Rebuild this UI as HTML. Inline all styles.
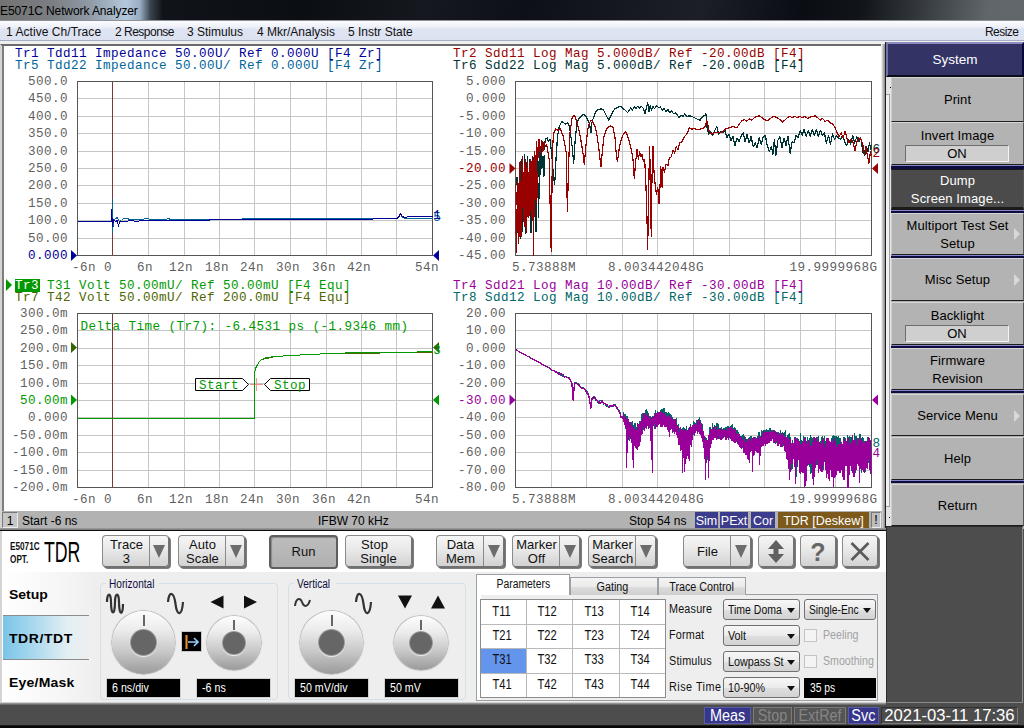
<!DOCTYPE html>
<html><head><meta charset="utf-8"><title>E5071C Network Analyzer</title>
<style>
*{box-sizing:border-box;margin:0;padding:0}
html,body{width:1024px;height:728px;overflow:hidden;background:#4d4d4d;font-family:"Liberation Sans",sans-serif;}
.abs{position:absolute}
#title{left:0;top:0;width:1024px;height:21px;background:
 linear-gradient(100deg,rgba(255,255,255,0) 0,rgba(255,255,255,0) 850px,rgba(70,75,80,.5) 900px,rgba(112,118,122,.8) 975px,rgba(108,113,116,.85) 1024px),
 linear-gradient(100deg,#23272c 0,#11151b 140px,#0b0e13 300px,#15191f 420px,#0d1016 520px,#1c2026 690px,#0a0d13 790px,#12161b 860px,#2a2e33 1024px);
 border-bottom:1px solid #8d9095}
#title .glow{left:0;top:0;width:175px;height:20px;background:linear-gradient(90deg,rgba(118,118,118,.95) 0,rgba(128,132,136,.95) 30%,rgba(150,162,175,.95) 52%,rgba(186,206,226,.97) 72%,rgba(168,190,212,.9) 80%,rgba(90,105,120,.55) 86%,rgba(20,25,30,0) 93%)}
#title .t{left:0px;top:4px;font-size:12px;color:#000;white-space:nowrap;letter-spacing:-0.1px}
#menu{left:0;top:21px;width:1024px;height:20px;background:linear-gradient(#fbfcfe 0,#eef1f9 30%,#dfe4f3 45%,#dde2f1 100%);border-bottom:1px solid #a9afc2;font-size:12px;color:#111}
#menu span{position:absolute;top:4px;white-space:nowrap}
#gap{left:0;top:41px;width:1024px;height:3px;background:#efefef}
/* chart window */
#cw{left:0;top:44px;width:885px;height:467px;background:#fff;border-left:2px solid #d4d4d4;border-top:2px solid #6b6b6b;box-shadow:inset 2px 0 0 #7d7d7d}
#cwr{left:881px;top:44px;width:5px;height:486px;background:linear-gradient(90deg,#fff 0,#d9d9d9 1px,#bdbdbd 2px,#8a8a8a 4px,#555 5px)}
#sb{left:0;top:511px;width:882px;height:18px;background:#b2b2b2;font-size:12px;color:#000;border-left:2px solid #d4d4d4}
#sb span{position:absolute;white-space:nowrap}
#sbline{left:0;top:528px;width:886px;height:3px;background:linear-gradient(#a2a2a2 0,#7a7a7a 60%,#0c0c0c 67%,#0c0c0c 100%);z-index:5}
.tag{position:absolute;top:1px;height:16px;color:#fff;font-size:12.5px;line-height:18px;text-align:center;white-space:nowrap}
</style></head><body>
<div id="title" class="abs"><div class="glow abs"></div><div class="t abs">E5071C Network Analyzer</div></div>
<div id="menu" class="abs"><span style="left:6px;letter-spacing:.05px">1 Active Ch/Trace</span><span style="left:115px;letter-spacing:-.5px">2 Response</span><span style="left:187px">3 Stimulus</span><span style="left:257px">4 Mkr/Analysis</span><span style="left:348px">5 Instr State</span><span style="left:985px;letter-spacing:-.55px">Resize</span></div>
<div id="gap" class="abs"></div>
<div id="cw" class="abs"></div>
<svg width="884" height="470" viewBox="0 43 884 470" style="position:absolute;left:0;top:43px" shape-rendering="auto">
<defs>
<clipPath id="ctl"><rect x="77" y="81" width="356" height="175"/></clipPath>
<clipPath id="ctr"><rect x="515.5" y="81" width="356" height="175"/></clipPath>
<clipPath id="cbl"><rect x="77" y="313" width="356" height="175"/></clipPath>
<clipPath id="cbr"><rect x="515.5" y="313" width="356" height="175"/></clipPath>
</defs>
<line x1="112.5" y1="82" x2="112.5" y2="255" stroke="#7a3a3a" stroke-width="1"/>
<line x1="148.5" y1="82" x2="148.5" y2="255" stroke="#c6c6c6" stroke-width="1"/>
<line x1="184.5" y1="82" x2="184.5" y2="255" stroke="#c6c6c6" stroke-width="1"/>
<line x1="219.5" y1="82" x2="219.5" y2="255" stroke="#c6c6c6" stroke-width="1"/>
<line x1="254.5" y1="82" x2="254.5" y2="255" stroke="#c6c6c6" stroke-width="1"/>
<line x1="290.5" y1="82" x2="290.5" y2="255" stroke="#c6c6c6" stroke-width="1"/>
<line x1="326.5" y1="82" x2="326.5" y2="255" stroke="#c6c6c6" stroke-width="1"/>
<line x1="361.5" y1="82" x2="361.5" y2="255" stroke="#c6c6c6" stroke-width="1"/>
<line x1="396.5" y1="82" x2="396.5" y2="255" stroke="#c6c6c6" stroke-width="1"/>
<line x1="78" y1="98.5" x2="432" y2="98.5" stroke="#c6c6c6" stroke-width="1"/>
<line x1="78" y1="116.5" x2="432" y2="116.5" stroke="#c6c6c6" stroke-width="1"/>
<line x1="78" y1="133.5" x2="432" y2="133.5" stroke="#c6c6c6" stroke-width="1"/>
<line x1="78" y1="151.5" x2="432" y2="151.5" stroke="#c6c6c6" stroke-width="1"/>
<line x1="78" y1="168.5" x2="432" y2="168.5" stroke="#c6c6c6" stroke-width="1"/>
<line x1="78" y1="185.5" x2="432" y2="185.5" stroke="#c6c6c6" stroke-width="1"/>
<line x1="78" y1="203.5" x2="432" y2="203.5" stroke="#c6c6c6" stroke-width="1"/>
<line x1="78" y1="220.5" x2="432" y2="220.5" stroke="#c6c6c6" stroke-width="1"/>
<line x1="78" y1="238.5" x2="432" y2="238.5" stroke="#c6c6c6" stroke-width="1"/>
<line x1="112.5" y1="82" x2="112.5" y2="255" stroke="#7a3a3a" stroke-width="1"/>
<rect x="77.5" y="81.5" width="355" height="174" fill="none" stroke="#555555" stroke-width="1"/>
<text x="15" y="57" fill="#000099" text-anchor="start" font-family="Liberation Mono, monospace" font-size="12.6" letter-spacing="0.44"  xml:space="preserve">Tr1 Tdd11 Impedance 50.00U/ Ref 0.000U [F4 Zr]</text>
<text x="15" y="69" fill="#006699" text-anchor="start" font-family="Liberation Mono, monospace" font-size="12.6" letter-spacing="0.44"  xml:space="preserve">Tr5 Tdd22 Impedance 50.00U/ Ref 0.000U [F4 Zr]</text>
<text x="68" y="84.9" fill="#5f5f5f" text-anchor="end" font-family="Liberation Mono, monospace" font-size="12.6" letter-spacing="0.44"  xml:space="preserve">500.0</text>
<text x="68" y="102.3" fill="#5f5f5f" text-anchor="end" font-family="Liberation Mono, monospace" font-size="12.6" letter-spacing="0.44"  xml:space="preserve">450.0</text>
<text x="68" y="119.7" fill="#5f5f5f" text-anchor="end" font-family="Liberation Mono, monospace" font-size="12.6" letter-spacing="0.44"  xml:space="preserve">400.0</text>
<text x="68" y="137.1" fill="#5f5f5f" text-anchor="end" font-family="Liberation Mono, monospace" font-size="12.6" letter-spacing="0.44"  xml:space="preserve">350.0</text>
<text x="68" y="154.5" fill="#5f5f5f" text-anchor="end" font-family="Liberation Mono, monospace" font-size="12.6" letter-spacing="0.44"  xml:space="preserve">300.0</text>
<text x="68" y="171.9" fill="#5f5f5f" text-anchor="end" font-family="Liberation Mono, monospace" font-size="12.6" letter-spacing="0.44"  xml:space="preserve">250.0</text>
<text x="68" y="189.3" fill="#5f5f5f" text-anchor="end" font-family="Liberation Mono, monospace" font-size="12.6" letter-spacing="0.44"  xml:space="preserve">200.0</text>
<text x="68" y="206.7" fill="#5f5f5f" text-anchor="end" font-family="Liberation Mono, monospace" font-size="12.6" letter-spacing="0.44"  xml:space="preserve">150.0</text>
<text x="68" y="224.1" fill="#5f5f5f" text-anchor="end" font-family="Liberation Mono, monospace" font-size="12.6" letter-spacing="0.44"  xml:space="preserve">100.0</text>
<text x="68" y="241.5" fill="#5f5f5f" text-anchor="end" font-family="Liberation Mono, monospace" font-size="12.6" letter-spacing="0.44"  xml:space="preserve">50.00</text>
<text x="68" y="258.9" fill="#000099" text-anchor="end" font-family="Liberation Mono, monospace" font-size="12.6" letter-spacing="0.44"  xml:space="preserve">0.000</text>
<path d="M77.5,221.5 L110.5,221.5 L111.5,220.5 L112.5,199.5 L112.5,232.5 L113.5,221.5 L115.5,218.5 L117.5,217.5 L118.5,220.5 L119.5,221.5 L121.5,220.5 L123.5,218.5 L126.5,218.5 L130.5,219.5 L135.5,219.5 L140.5,219.5 L147.5,218.5 L150.5,219.5 L165.5,219.5 L168.5,218.5 L170.5,219.5 L200.5,219.5 L240.5,219.5 L244.5,218.5 L255.5,218.5 L300.5,218.5 L330.5,218.5 L396.5,218.5 L398.5,217.5 L400.5,214.5 L402.5,217.5 L405.5,218.5 L433.5,218.5" fill="none" stroke="#006699" stroke-width="1" stroke-linejoin="round" shape-rendering="crispEdges" clip-path="url(#ctl)"/>
<path d="M77.5,221.5 L111.5,221.5 L111.5,209.5 L112.5,226.5 L113.5,219.5 L115.5,221.5 L117.5,220.5 L118.5,226.5 L119.5,221.5 L122.5,221.5 L125.5,221.5 L130.5,220.5 L137.5,221.5 L140.5,220.5 L150.5,220.5 L200.5,220.5 L208.5,220.5 L210.5,219.5 L260.5,219.5 L300.5,219.5 L350.5,219.5 L396.5,218.5 L398.5,217.5 L400.5,213.5 L402.5,216.5 L404.5,217.5 L410.5,216.5 L433.5,216.5" fill="none" stroke="#000099" stroke-width="1" stroke-linejoin="round" shape-rendering="crispEdges" clip-path="url(#ctl)"/>
<path d="M71,250.0 L77,255.5 L71,261.0 Z" fill="#000099"/>
<path d="M439,250.0 L433,255.5 L439,261.0 Z" fill="#000099"/>
<text x="433.2" y="220.9" fill="#006699" text-anchor="start" font-family="Liberation Mono, monospace" font-size="12.6" letter-spacing="0.44"  xml:space="preserve">5</text>
<text x="433.2" y="218.7" fill="#000099" text-anchor="start" font-family="Liberation Mono, monospace" font-size="12.6" letter-spacing="0.44"  xml:space="preserve">1</text>
<text x="72" y="271" fill="#5f5f5f" text-anchor="start" font-family="Liberation Mono, monospace" font-size="12.6" letter-spacing="0.44"  xml:space="preserve">-6n</text>
<text x="104" y="271" fill="#5f5f5f" text-anchor="start" font-family="Liberation Mono, monospace" font-size="12.6" letter-spacing="0.44"  xml:space="preserve">0</text>
<text x="137" y="271" fill="#5f5f5f" text-anchor="start" font-family="Liberation Mono, monospace" font-size="12.6" letter-spacing="0.44"  xml:space="preserve">6n</text>
<text x="169" y="271" fill="#5f5f5f" text-anchor="start" font-family="Liberation Mono, monospace" font-size="12.6" letter-spacing="0.44"  xml:space="preserve">12n</text>
<text x="205" y="271" fill="#5f5f5f" text-anchor="start" font-family="Liberation Mono, monospace" font-size="12.6" letter-spacing="0.44"  xml:space="preserve">18n</text>
<text x="240" y="271" fill="#5f5f5f" text-anchor="start" font-family="Liberation Mono, monospace" font-size="12.6" letter-spacing="0.44"  xml:space="preserve">24n</text>
<text x="276" y="271" fill="#5f5f5f" text-anchor="start" font-family="Liberation Mono, monospace" font-size="12.6" letter-spacing="0.44"  xml:space="preserve">30n</text>
<text x="312" y="271" fill="#5f5f5f" text-anchor="start" font-family="Liberation Mono, monospace" font-size="12.6" letter-spacing="0.44"  xml:space="preserve">36n</text>
<text x="347" y="271" fill="#5f5f5f" text-anchor="start" font-family="Liberation Mono, monospace" font-size="12.6" letter-spacing="0.44"  xml:space="preserve">42n</text>
<text x="439" y="271" fill="#5f5f5f" text-anchor="end" font-family="Liberation Mono, monospace" font-size="12.6" letter-spacing="0.44"  xml:space="preserve">54n</text>
<text x="72" y="503" fill="#5f5f5f" text-anchor="start" font-family="Liberation Mono, monospace" font-size="12.6" letter-spacing="0.44"  xml:space="preserve">-6n</text>
<text x="104" y="503" fill="#5f5f5f" text-anchor="start" font-family="Liberation Mono, monospace" font-size="12.6" letter-spacing="0.44"  xml:space="preserve">0</text>
<text x="137" y="503" fill="#5f5f5f" text-anchor="start" font-family="Liberation Mono, monospace" font-size="12.6" letter-spacing="0.44"  xml:space="preserve">6n</text>
<text x="169" y="503" fill="#5f5f5f" text-anchor="start" font-family="Liberation Mono, monospace" font-size="12.6" letter-spacing="0.44"  xml:space="preserve">12n</text>
<text x="205" y="503" fill="#5f5f5f" text-anchor="start" font-family="Liberation Mono, monospace" font-size="12.6" letter-spacing="0.44"  xml:space="preserve">18n</text>
<text x="240" y="503" fill="#5f5f5f" text-anchor="start" font-family="Liberation Mono, monospace" font-size="12.6" letter-spacing="0.44"  xml:space="preserve">24n</text>
<text x="276" y="503" fill="#5f5f5f" text-anchor="start" font-family="Liberation Mono, monospace" font-size="12.6" letter-spacing="0.44"  xml:space="preserve">30n</text>
<text x="312" y="503" fill="#5f5f5f" text-anchor="start" font-family="Liberation Mono, monospace" font-size="12.6" letter-spacing="0.44"  xml:space="preserve">36n</text>
<text x="347" y="503" fill="#5f5f5f" text-anchor="start" font-family="Liberation Mono, monospace" font-size="12.6" letter-spacing="0.44"  xml:space="preserve">42n</text>
<text x="439" y="503" fill="#5f5f5f" text-anchor="end" font-family="Liberation Mono, monospace" font-size="12.6" letter-spacing="0.44"  xml:space="preserve">54n</text>
<line x1="551.5" y1="82" x2="551.5" y2="255" stroke="#c6c6c6" stroke-width="1"/>
<line x1="586.5" y1="82" x2="586.5" y2="255" stroke="#c6c6c6" stroke-width="1"/>
<line x1="622.5" y1="82" x2="622.5" y2="255" stroke="#c6c6c6" stroke-width="1"/>
<line x1="657.5" y1="82" x2="657.5" y2="255" stroke="#c6c6c6" stroke-width="1"/>
<line x1="693.5" y1="82" x2="693.5" y2="255" stroke="#c6c6c6" stroke-width="1"/>
<line x1="729.5" y1="82" x2="729.5" y2="255" stroke="#c6c6c6" stroke-width="1"/>
<line x1="764.5" y1="82" x2="764.5" y2="255" stroke="#c6c6c6" stroke-width="1"/>
<line x1="800.5" y1="82" x2="800.5" y2="255" stroke="#c6c6c6" stroke-width="1"/>
<line x1="835.5" y1="82" x2="835.5" y2="255" stroke="#c6c6c6" stroke-width="1"/>
<line x1="516" y1="98.5" x2="871" y2="98.5" stroke="#c6c6c6" stroke-width="1"/>
<line x1="516" y1="116.5" x2="871" y2="116.5" stroke="#c6c6c6" stroke-width="1"/>
<line x1="516" y1="133.5" x2="871" y2="133.5" stroke="#c6c6c6" stroke-width="1"/>
<line x1="516" y1="151.5" x2="871" y2="151.5" stroke="#c6c6c6" stroke-width="1"/>
<line x1="516" y1="168.5" x2="871" y2="168.5" stroke="#c6c6c6" stroke-width="1"/>
<line x1="516" y1="185.5" x2="871" y2="185.5" stroke="#c6c6c6" stroke-width="1"/>
<line x1="516" y1="203.5" x2="871" y2="203.5" stroke="#c6c6c6" stroke-width="1"/>
<line x1="516" y1="220.5" x2="871" y2="220.5" stroke="#c6c6c6" stroke-width="1"/>
<line x1="516" y1="238.5" x2="871" y2="238.5" stroke="#c6c6c6" stroke-width="1"/>
<rect x="515.5" y="81.5" width="356" height="174" fill="none" stroke="#555555" stroke-width="1"/>
<text x="453" y="57" fill="#990000" text-anchor="start" font-family="Liberation Mono, monospace" font-size="12.6" letter-spacing="0.44"  xml:space="preserve">Tr2 Sdd11 Log Mag 5.000dB/ Ref -20.00dB [F4]</text>
<text x="453" y="69" fill="#003333" text-anchor="start" font-family="Liberation Mono, monospace" font-size="12.6" letter-spacing="0.44"  xml:space="preserve">Tr6 Sdd22 Log Mag 5.000dB/ Ref -20.00dB [F4]</text>
<text x="506" y="84.9" fill="#5f5f5f" text-anchor="end" font-family="Liberation Mono, monospace" font-size="12.6" letter-spacing="0.44"  xml:space="preserve">5.000</text>
<text x="506" y="102.3" fill="#5f5f5f" text-anchor="end" font-family="Liberation Mono, monospace" font-size="12.6" letter-spacing="0.44"  xml:space="preserve">0.000</text>
<text x="506" y="119.7" fill="#5f5f5f" text-anchor="end" font-family="Liberation Mono, monospace" font-size="12.6" letter-spacing="0.44"  xml:space="preserve">-5.000</text>
<text x="506" y="137.1" fill="#5f5f5f" text-anchor="end" font-family="Liberation Mono, monospace" font-size="12.6" letter-spacing="0.44"  xml:space="preserve">-10.00</text>
<text x="506" y="154.5" fill="#5f5f5f" text-anchor="end" font-family="Liberation Mono, monospace" font-size="12.6" letter-spacing="0.44"  xml:space="preserve">-15.00</text>
<text x="506" y="171.9" fill="#990000" text-anchor="end" font-family="Liberation Mono, monospace" font-size="12.6" letter-spacing="0.44"  xml:space="preserve">-20.00</text>
<text x="506" y="189.3" fill="#5f5f5f" text-anchor="end" font-family="Liberation Mono, monospace" font-size="12.6" letter-spacing="0.44"  xml:space="preserve">-25.00</text>
<text x="506" y="206.7" fill="#5f5f5f" text-anchor="end" font-family="Liberation Mono, monospace" font-size="12.6" letter-spacing="0.44"  xml:space="preserve">-30.00</text>
<text x="506" y="224.1" fill="#5f5f5f" text-anchor="end" font-family="Liberation Mono, monospace" font-size="12.6" letter-spacing="0.44"  xml:space="preserve">-35.00</text>
<text x="506" y="241.5" fill="#5f5f5f" text-anchor="end" font-family="Liberation Mono, monospace" font-size="12.6" letter-spacing="0.44"  xml:space="preserve">-40.00</text>
<text x="506" y="258.9" fill="#5f5f5f" text-anchor="end" font-family="Liberation Mono, monospace" font-size="12.6" letter-spacing="0.44"  xml:space="preserve">-45.00</text>
<path d="M517.0,192.6 L517.6,225.3 L518.1,192.7 L518.8,243.1 L519.6,186.6 L520.4,238.6 L520.9,187.8 L521.9,232.8 L522.5,187.1 L523.6,214.3 L524.4,187.3 L524.9,203.1 L525.5,178.9 L526.1,216.6 L527.1,177.0 L528.0,202.9 L528.7,177.7 L529.2,215.7 L529.8,177.2 L530.6,205.6 L531.4,173.0 L532.1,190.0 L533.0,169.1 L533.9,192.6 L534.9,170.3 L535.6,178.6 L536.1,166.0 L537.1,193.0 L537.9,160.5 L538.8,176.6 L539.6,164.7 L540.3,174.7 L541.2,160.1 L541.9,168.7 L543.0,156.6 L543.9,176.9 L544.9,155.4" fill="none" stroke="#003333" stroke-width="1.2" stroke-linejoin="round" shape-rendering="crispEdges" clip-path="url(#ctr)"/>
<path d="M515.6,187.2 L517.1,177.1 L518.3,242.8 L519.6,172.0 L520.9,217.5 L522.1,159.4 L523.4,207.4 L524.7,154.3 L525.9,233.9 L527.2,156.9 L528.4,215.0 L529.7,159.4 L531.0,232.6 L532.2,156.9 L533.5,197.3 L534.8,159.4 L536.0,231.4 L537.3,151.8 L538.6,217.5 L539.8,146.7 L541.1,161.9 L542.3,141.7 L544.1,149.3 L545.4,139.2 L547.1,137.9 L548.4,141.7 L549.9,139.2 L550.9,146.7 L552.2,159.4 L553.5,177.1 L554.7,184.6 L556.0,159.4 L557.5,136.6 L559.3,126.5 L561.8,121.5 L563.6,122.7 L565.6,124.0 L567.6,122.7 L569.4,126.5 L570.6,134.1 L572.2,146.7 L573.7,163.2 L575.2,139.2 L577.0,122.7 L579.5,117.7 L582.0,115.2 L584.0,113.9 L585.8,116.4 L587.8,120.2 L589.6,124.0 L590.9,132.8 L591.6,124.0 L593.4,117.7 L595.9,111.4 L598.4,109.4 L601.0,108.8 L603.5,110.1 L605.5,113.9 L607.3,117.7 L609.0,120.2 L610.6,116.4 L612.3,112.6 L614.9,108.8 L617.4,107.6 L619.9,106.3 L622.4,107.6 L625.0,110.1 L627.5,112.6 L629.3,110.1 L630.8,107.6 L632.5,110.1 L634.3,106.8 L635.8,108.8 L637.6,106.3 L639.4,108.3 L641.4,106.3 L643.4,108.3 L645.2,113.9 L646.4,107.6 L647.7,102.5 L649.0,111.4 L650.2,105.8 L651.5,110.1 L653.0,106.3 L654.5,108.8 L656.5,105.8 L658.6,107.6 L660.3,106.8 L662.1,110.1 L664.1,108.8 L666.1,111.4 L667.9,109.4 L669.7,112.6 L671.7,110.9 L673.7,113.9 L675.5,112.6 L677.3,115.2 L679.3,117.7 L681.3,115.2 L683.1,116.4 L684.8,113.9 L686.9,116.4 L689.4,115.9 L691.9,116.4 L694.4,117.7 L697.0,119.0 L700.0,120.2 L702.6,116.4 L704.7,115.2 L705.9,113.9 L707.2,129.1 L708.9,134.1 L710.7,131.6 L712.7,135.4 L714.8,130.3 L716.8,126.5 L718.8,134.1 L720.8,131.6 L722.8,132.8 L724.9,130.3 L726.9,137.9 L728.9,134.1 L730.9,140.4 L733.0,136.6 L735.0,145.5 L737.0,137.9 L739.0,141.7 L741.0,136.6 L743.1,132.8 L745.1,141.7 L747.1,134.1 L749.1,143.0 L751.1,136.6 L753.2,146.7 L755.2,143.0 L757.2,148.0 L759.2,137.9 L761.2,144.2 L763.3,136.6 L765.3,135.4 L767.3,145.5 L769.3,151.8 L771.4,146.7 L772.9,154.3 L774.4,139.2 L775.9,155.6 L777.9,140.4 L779.9,136.6 L782.0,148.0 L784.0,137.9 L786.0,145.5 L788.0,136.6 L790.1,153.1 L792.1,141.7 L794.1,143.0 L796.1,135.4 L798.1,137.9 L800.2,130.3 L802.2,135.4 L804.2,129.1 L806.2,136.6 L808.2,130.3 L810.3,136.6 L812.3,129.1 L814.3,135.4 L816.3,129.1 L818.4,136.6 L820.4,130.3 L822.4,135.4 L824.4,132.8 L826.4,143.0 L828.5,135.4 L830.5,144.2 L832.5,134.1 L834.5,139.2 L836.5,135.4 L838.6,137.9 L840.6,139.2 L842.6,135.4 L844.6,141.7 L846.6,145.5 L848.7,139.2 L850.7,144.2 L852.7,135.4 L854.7,143.0 L856.8,136.6 L858.8,141.7 L860.8,137.9 L862.8,151.8 L864.8,155.6 L866.4,146.7 L867.9,151.8 L869.4,143.0 L870.9,149.3 L871.4,144.2" fill="none" stroke="#003333" stroke-width="1.2" stroke-linejoin="round" shape-rendering="crispEdges" clip-path="url(#ctr)"/>
<path d="M517.0,191.6 L517.5,230.4 L518.2,183.2 L518.8,236.4 L519.2,181.8 L519.9,236.1 L520.4,182.5 L521.2,236.1 L521.7,181.5 L522.5,207.0 L523.3,176.7 L523.9,221.9 L524.6,179.9 L525.1,226.9 L525.5,172.6 L526.1,210.0 L526.6,169.0 L527.2,216.6 L527.8,174.6 L528.5,209.2 L529.2,170.1 L529.5,193.1 L530.3,169.9 L531.0,210.1 L531.6,161.5 L532.2,220.8 L532.6,160.6 L533.1,209.0 L533.5,157.6 L533.9,217.0 L534.4,156.2 L535.2,195.3 L535.6,156.0 L536.2,203.5 L536.6,159.2 L537.4,197.7" fill="none" stroke="#990000" stroke-width="1.3" stroke-linejoin="round" shape-rendering="crispEdges" clip-path="url(#ctr)"/>
<path d="M515.6,187.2 L516.3,252.9 L517.6,182.1 L518.8,242.8 L520.1,161.9 L521.4,227.6 L522.6,156.9 L523.9,217.5 L525.2,159.4 L526.4,232.6 L527.7,161.9 L528.9,217.5 L530.2,159.4 L531.5,209.9 L532.7,164.4 L533.5,255.4 L534.5,151.8 L535.3,197.3 L536.5,141.7 L537.8,159.4 L539.1,139.2 L540.3,154.3 L541.6,140.4 L542.8,151.8 L544.1,141.7 L545.4,146.7 L546.6,144.2 L547.9,151.8 L549.2,159.4 L549.9,194.8 L551.2,251.6 L552.4,151.8 L553.5,134.1 L555.5,129.1 L558.0,130.3 L560.5,129.1 L561.8,132.8 L563.1,135.4 L564.3,141.7 L566.1,151.8 L567.4,211.2 L568.6,164.4 L569.9,134.1 L571.9,119.0 L573.7,115.2 L575.2,116.4 L577.0,122.7 L578.7,129.1 L580.7,139.2 L582.8,151.8 L584.3,164.4 L585.8,146.7 L587.6,130.3 L589.6,122.7 L591.4,120.2 L593.4,122.7 L595.4,127.8 L597.2,136.6 L598.9,149.3 L601.0,167.0 L602.5,149.3 L604.0,136.6 L606.0,130.3 L608.5,126.5 L611.1,126.0 L613.1,127.8 L614.9,136.6 L616.1,151.8 L617.4,161.9 L619.1,149.3 L621.2,139.2 L623.7,133.6 L625.7,132.1 L627.5,135.4 L629.3,141.7 L631.3,149.3 L633.0,159.4 L634.3,178.3 L635.6,161.9 L637.1,149.3 L638.4,159.4 L639.6,151.8 L640.9,156.9 L642.1,154.3 L643.4,161.9 L644.7,159.4 L645.9,184.6 L646.7,207.4 L647.7,249.1 L648.5,202.3 L649.5,146.7 L650.5,177.1 L651.2,236.4 L652.0,177.1 L653.0,146.7 L654.0,172.0 L655.3,185.9 L656.5,194.8 L657.8,187.2 L659.1,203.6 L660.1,184.6 L660.8,167.0 L662.1,187.2 L663.1,167.0 L664.6,172.0 L666.1,164.4 L667.9,165.7 L669.2,158.1 L671.2,156.9 L673.0,150.5 L674.7,153.1 L676.2,146.7 L678.0,149.3 L679.8,143.0 L681.8,141.7 L684.3,136.6 L686.9,134.1 L689.4,127.8 L691.9,129.1 L694.4,128.3 L697.0,129.6 L700.0,129.1 L703.9,127.8 L705.7,125.3 L706.7,120.2 L707.7,124.0 L708.9,130.3 L711.5,134.1 L714.0,132.8 L717.8,132.1 L721.6,132.8 L725.4,129.1 L729.2,127.8 L733.0,126.5 L736.7,127.8 L739.3,124.0 L741.8,121.0 L744.3,119.5 L746.8,121.0 L749.4,119.0 L751.9,120.2 L754.4,117.7 L757.0,116.4 L759.5,115.9 L762.0,117.7 L764.5,119.5 L767.1,121.0 L769.6,119.0 L772.1,117.2 L774.6,116.4 L777.2,117.7 L779.7,119.5 L782.2,122.0 L784.7,120.2 L787.3,117.7 L789.8,116.4 L792.3,117.7 L794.9,116.4 L797.4,117.7 L799.9,116.4 L802.4,117.7 L805.0,116.4 L807.5,118.4 L810.0,117.2 L812.5,116.4 L815.1,115.9 L817.6,117.7 L820.1,120.2 L822.6,118.4 L825.2,121.5 L827.7,120.2 L830.2,122.7 L832.8,124.0 L835.3,127.8 L837.0,132.8 L839.1,136.6 L841.1,132.8 L843.1,137.9 L845.1,131.6 L847.2,139.2 L849.2,143.0 L851.2,139.2 L853.2,143.0 L855.0,150.5 L856.8,141.7 L858.8,137.9 L860.8,139.2 L862.8,144.2 L864.3,154.3 L865.9,146.7 L867.4,155.6 L868.9,163.2 L870.4,151.8 L871.4,156.9" fill="none" stroke="#990000" stroke-width="1.2" stroke-linejoin="round" shape-rendering="crispEdges" clip-path="url(#ctr)"/>
<path d="M509.5,163.0 L515.5,168.5 L509.5,174.0 Z" fill="#990000"/>
<path d="M878,163.0 L872,168.5 L878,174.0 Z" fill="#990000"/>
<text x="872.5" y="152.7" fill="#003333" text-anchor="start" font-family="Liberation Mono, monospace" font-size="12.6" letter-spacing="0.44" font-size="11.5" xml:space="preserve">6</text>
<text x="872.5" y="156.6" fill="#990000" text-anchor="start" font-family="Liberation Mono, monospace" font-size="12.6" letter-spacing="0.44" font-size="11.5" xml:space="preserve">2</text>
<text x="512" y="271" fill="#5f5f5f" text-anchor="start" font-family="Liberation Mono, monospace" font-size="12.6" letter-spacing="0.44"  xml:space="preserve">5.73888M</text>
<text x="608" y="271" fill="#5f5f5f" text-anchor="start" font-family="Liberation Mono, monospace" font-size="12.6" letter-spacing="0.44"  xml:space="preserve">8.003442048G</text>
<text x="877.5" y="271" fill="#5f5f5f" text-anchor="end" font-family="Liberation Mono, monospace" font-size="12.6" letter-spacing="0.44"  xml:space="preserve">19.9999968G</text>
<text x="512" y="503" fill="#5f5f5f" text-anchor="start" font-family="Liberation Mono, monospace" font-size="12.6" letter-spacing="0.44"  xml:space="preserve">5.73888M</text>
<text x="608" y="503" fill="#5f5f5f" text-anchor="start" font-family="Liberation Mono, monospace" font-size="12.6" letter-spacing="0.44"  xml:space="preserve">8.003442048G</text>
<text x="877.5" y="503" fill="#5f5f5f" text-anchor="end" font-family="Liberation Mono, monospace" font-size="12.6" letter-spacing="0.44"  xml:space="preserve">19.9999968G</text>
<line x1="112.5" y1="314" x2="112.5" y2="487" stroke="#7a3a3a" stroke-width="1"/>
<line x1="148.5" y1="314" x2="148.5" y2="487" stroke="#c6c6c6" stroke-width="1"/>
<line x1="184.5" y1="314" x2="184.5" y2="487" stroke="#c6c6c6" stroke-width="1"/>
<line x1="219.5" y1="314" x2="219.5" y2="487" stroke="#c6c6c6" stroke-width="1"/>
<line x1="254.5" y1="314" x2="254.5" y2="487" stroke="#c6c6c6" stroke-width="1"/>
<line x1="290.5" y1="314" x2="290.5" y2="487" stroke="#c6c6c6" stroke-width="1"/>
<line x1="326.5" y1="314" x2="326.5" y2="487" stroke="#c6c6c6" stroke-width="1"/>
<line x1="361.5" y1="314" x2="361.5" y2="487" stroke="#c6c6c6" stroke-width="1"/>
<line x1="396.5" y1="314" x2="396.5" y2="487" stroke="#c6c6c6" stroke-width="1"/>
<line x1="78" y1="330.5" x2="432" y2="330.5" stroke="#c6c6c6" stroke-width="1"/>
<line x1="78" y1="348.5" x2="432" y2="348.5" stroke="#c6c6c6" stroke-width="1"/>
<line x1="78" y1="365.5" x2="432" y2="365.5" stroke="#c6c6c6" stroke-width="1"/>
<line x1="78" y1="383.5" x2="432" y2="383.5" stroke="#c6c6c6" stroke-width="1"/>
<line x1="78" y1="400.5" x2="432" y2="400.5" stroke="#c6c6c6" stroke-width="1"/>
<line x1="78" y1="417.5" x2="432" y2="417.5" stroke="#c6c6c6" stroke-width="1"/>
<line x1="78" y1="435.5" x2="432" y2="435.5" stroke="#c6c6c6" stroke-width="1"/>
<line x1="78" y1="452.5" x2="432" y2="452.5" stroke="#c6c6c6" stroke-width="1"/>
<line x1="78" y1="470.5" x2="432" y2="470.5" stroke="#c6c6c6" stroke-width="1"/>
<line x1="112.5" y1="314" x2="112.5" y2="487" stroke="#7a3a3a" stroke-width="1"/>
<rect x="77.5" y="313.5" width="355" height="174" fill="none" stroke="#555555" stroke-width="1"/>
<path d="M6,279 L12,285 L6,291 Z" fill="#009900"/>
<rect x="15" y="279" width="25" height="13" fill="#009900"/>
<text x="15" y="289" fill="#ffffff" text-anchor="start" font-family="Liberation Mono, monospace" font-size="12.6" letter-spacing="0.44"  xml:space="preserve">Tr3</text>
<text x="47" y="289" fill="#009900" text-anchor="start" font-family="Liberation Mono, monospace" font-size="12.6" letter-spacing="0.44"  xml:space="preserve">T31 Volt 50.00mU/ Ref 50.00mU [F4 Equ]</text>
<text x="15" y="301" fill="#4d6600" text-anchor="start" font-family="Liberation Mono, monospace" font-size="12.6" letter-spacing="0.44"  xml:space="preserve">Tr7 T42 Volt 50.00mU/ Ref 200.0mU [F4 Equ]</text>
<text x="68" y="316.9" fill="#5f5f5f" text-anchor="end" font-family="Liberation Mono, monospace" font-size="12.6" letter-spacing="0.44"  xml:space="preserve">300.0m</text>
<text x="68" y="334.3" fill="#5f5f5f" text-anchor="end" font-family="Liberation Mono, monospace" font-size="12.6" letter-spacing="0.44"  xml:space="preserve">250.0m</text>
<text x="68" y="351.7" fill="#5f5f5f" text-anchor="end" font-family="Liberation Mono, monospace" font-size="12.6" letter-spacing="0.44"  xml:space="preserve">200.0m</text>
<text x="68" y="369.1" fill="#5f5f5f" text-anchor="end" font-family="Liberation Mono, monospace" font-size="12.6" letter-spacing="0.44"  xml:space="preserve">150.0m</text>
<text x="68" y="386.5" fill="#5f5f5f" text-anchor="end" font-family="Liberation Mono, monospace" font-size="12.6" letter-spacing="0.44"  xml:space="preserve">100.0m</text>
<text x="68" y="403.9" fill="#009900" text-anchor="end" font-family="Liberation Mono, monospace" font-size="12.6" letter-spacing="0.44"  xml:space="preserve">50.00m</text>
<text x="68" y="421.3" fill="#5f5f5f" text-anchor="end" font-family="Liberation Mono, monospace" font-size="12.6" letter-spacing="0.44"  xml:space="preserve">0.000</text>
<text x="68" y="438.7" fill="#5f5f5f" text-anchor="end" font-family="Liberation Mono, monospace" font-size="12.6" letter-spacing="0.44"  xml:space="preserve">-50.00m</text>
<text x="68" y="456.1" fill="#5f5f5f" text-anchor="end" font-family="Liberation Mono, monospace" font-size="12.6" letter-spacing="0.44"  xml:space="preserve">-100.0m</text>
<text x="68" y="473.5" fill="#5f5f5f" text-anchor="end" font-family="Liberation Mono, monospace" font-size="12.6" letter-spacing="0.44"  xml:space="preserve">-150.0m</text>
<text x="68" y="490.9" fill="#5f5f5f" text-anchor="end" font-family="Liberation Mono, monospace" font-size="12.6" letter-spacing="0.44"  xml:space="preserve">-200.0m</text>
<text x="80.5" y="330" fill="#009900" text-anchor="start" font-family="Liberation Mono, monospace" font-size="12.6" letter-spacing="0.44"  xml:space="preserve">Delta Time (Tr7): -6.4531 ps (-1.9346 mm)</text>
<path d="M250,384.5 H263 M256.5,378 V391" stroke="#ff8c8c" stroke-width="1" fill="none"/>
<path d="M77.5,418.5 L254.5,418.5 L254.5,400.5 L254.5,373.5 L255.5,368.5 L256.5,366.5 L257.5,364.5 L259.5,361.5 L261.5,359.5 L266.5,358.5 L275.5,356.5 L290.5,355.5 L310.5,354.5 L330.5,353.5 L360.5,353.5 L400.5,352.5 L433.5,352.5" fill="none" stroke="#4d6600" stroke-width="1" stroke-linejoin="round" shape-rendering="crispEdges" clip-path="url(#cbl)"/>
<path d="M77.5,418.5 L254.5,418.5 L254.5,400.5 L254.5,373.5 L255.5,368.5 L256.5,366.5 L257.5,364.5 L259.5,361.5 L261.5,359.5 L266.5,357.5 L275.5,356.5 L290.5,355.5 L310.5,354.5 L330.5,353.5 L360.5,352.5 L400.5,352.5 L433.5,351.5" fill="none" stroke="#009900" stroke-width="1" stroke-linejoin="round" shape-rendering="crispEdges" clip-path="url(#cbl)"/>
<path d="M71,342.0 L77,347.5 L71,353.0 Z" fill="#336600"/>
<path d="M439,342.0 L433,347.5 L439,353.0 Z" fill="#336600"/>
<path d="M71,394.5 L77,400 L71,405.5 Z" fill="#009900"/>
<path d="M439,394.5 L433,400 L439,405.5 Z" fill="#009900"/>
<text x="433.2" y="353.9" fill="#009900" text-anchor="start" font-family="Liberation Mono, monospace" font-size="12.6" letter-spacing="0.44"  xml:space="preserve">3</text>
<path d="M195.5,378.5 H242.5 L248.5,384.5 L242.5,390.5 H195.5 Z" fill="#fff" stroke="#000" stroke-width="1"/>
<text x="199" y="389" fill="#009900" text-anchor="start" font-family="Liberation Mono, monospace" font-size="12.6" letter-spacing="0.44"  xml:space="preserve">Start</text>
<path d="M309.5,378.5 H270.5 L264.5,384.5 L270.5,390.5 H309.5 Z" fill="#fff" stroke="#000" stroke-width="1"/>
<text x="274" y="389" fill="#009900" text-anchor="start" font-family="Liberation Mono, monospace" font-size="12.6" letter-spacing="0.44"  xml:space="preserve">Stop</text>
<line x1="551.5" y1="314" x2="551.5" y2="487" stroke="#c6c6c6" stroke-width="1"/>
<line x1="586.5" y1="314" x2="586.5" y2="487" stroke="#c6c6c6" stroke-width="1"/>
<line x1="622.5" y1="314" x2="622.5" y2="487" stroke="#c6c6c6" stroke-width="1"/>
<line x1="657.5" y1="314" x2="657.5" y2="487" stroke="#c6c6c6" stroke-width="1"/>
<line x1="693.5" y1="314" x2="693.5" y2="487" stroke="#c6c6c6" stroke-width="1"/>
<line x1="729.5" y1="314" x2="729.5" y2="487" stroke="#c6c6c6" stroke-width="1"/>
<line x1="764.5" y1="314" x2="764.5" y2="487" stroke="#c6c6c6" stroke-width="1"/>
<line x1="800.5" y1="314" x2="800.5" y2="487" stroke="#c6c6c6" stroke-width="1"/>
<line x1="835.5" y1="314" x2="835.5" y2="487" stroke="#c6c6c6" stroke-width="1"/>
<line x1="516" y1="330.5" x2="871" y2="330.5" stroke="#c6c6c6" stroke-width="1"/>
<line x1="516" y1="348.5" x2="871" y2="348.5" stroke="#c6c6c6" stroke-width="1"/>
<line x1="516" y1="365.5" x2="871" y2="365.5" stroke="#c6c6c6" stroke-width="1"/>
<line x1="516" y1="383.5" x2="871" y2="383.5" stroke="#c6c6c6" stroke-width="1"/>
<line x1="516" y1="400.5" x2="871" y2="400.5" stroke="#c6c6c6" stroke-width="1"/>
<line x1="516" y1="417.5" x2="871" y2="417.5" stroke="#c6c6c6" stroke-width="1"/>
<line x1="516" y1="435.5" x2="871" y2="435.5" stroke="#c6c6c6" stroke-width="1"/>
<line x1="516" y1="452.5" x2="871" y2="452.5" stroke="#c6c6c6" stroke-width="1"/>
<line x1="516" y1="470.5" x2="871" y2="470.5" stroke="#c6c6c6" stroke-width="1"/>
<rect x="515.5" y="313.5" width="356" height="174" fill="none" stroke="#555555" stroke-width="1"/>
<text x="453" y="289" fill="#990099" text-anchor="start" font-family="Liberation Mono, monospace" font-size="12.6" letter-spacing="0.44"  xml:space="preserve">Tr4 Sdd21 Log Mag 10.00dB/ Ref -30.00dB [F4]</text>
<text x="453" y="301" fill="#006666" text-anchor="start" font-family="Liberation Mono, monospace" font-size="12.6" letter-spacing="0.44"  xml:space="preserve">Tr8 Sdd12 Log Mag 10.00dB/ Ref -30.00dB [F4]</text>
<text x="506" y="316.9" fill="#5f5f5f" text-anchor="end" font-family="Liberation Mono, monospace" font-size="12.6" letter-spacing="0.44"  xml:space="preserve">20.00</text>
<text x="506" y="334.3" fill="#5f5f5f" text-anchor="end" font-family="Liberation Mono, monospace" font-size="12.6" letter-spacing="0.44"  xml:space="preserve">10.00</text>
<text x="506" y="351.7" fill="#5f5f5f" text-anchor="end" font-family="Liberation Mono, monospace" font-size="12.6" letter-spacing="0.44"  xml:space="preserve">0.000</text>
<text x="506" y="369.1" fill="#5f5f5f" text-anchor="end" font-family="Liberation Mono, monospace" font-size="12.6" letter-spacing="0.44"  xml:space="preserve">-10.00</text>
<text x="506" y="386.5" fill="#5f5f5f" text-anchor="end" font-family="Liberation Mono, monospace" font-size="12.6" letter-spacing="0.44"  xml:space="preserve">-20.00</text>
<text x="506" y="403.9" fill="#990099" text-anchor="end" font-family="Liberation Mono, monospace" font-size="12.6" letter-spacing="0.44"  xml:space="preserve">-30.00</text>
<text x="506" y="421.3" fill="#5f5f5f" text-anchor="end" font-family="Liberation Mono, monospace" font-size="12.6" letter-spacing="0.44"  xml:space="preserve">-40.00</text>
<text x="506" y="438.7" fill="#5f5f5f" text-anchor="end" font-family="Liberation Mono, monospace" font-size="12.6" letter-spacing="0.44"  xml:space="preserve">-50.00</text>
<text x="506" y="456.1" fill="#5f5f5f" text-anchor="end" font-family="Liberation Mono, monospace" font-size="12.6" letter-spacing="0.44"  xml:space="preserve">-60.00</text>
<text x="506" y="473.5" fill="#5f5f5f" text-anchor="end" font-family="Liberation Mono, monospace" font-size="12.6" letter-spacing="0.44"  xml:space="preserve">-70.00</text>
<text x="506" y="490.9" fill="#5f5f5f" text-anchor="end" font-family="Liberation Mono, monospace" font-size="12.6" letter-spacing="0.44"  xml:space="preserve">-80.00</text>
<path d="M515.6,349.7 L516.8,350.4 L518.0,351.1 L519.2,351.8 L520.4,352.4 L521.6,353.1 L522.8,353.4 L524.0,354.3 L525.2,355.1 L526.4,355.6 L527.6,356.4 L528.8,356.7 L530.0,357.5 L531.2,358.1 L532.4,358.9 L533.6,359.5 L534.8,360.0 L536.0,360.7 L537.2,361.4 L538.4,362.3 L539.6,362.9 L540.8,363.3 L542.0,364.2 L543.2,364.6 L544.4,365.4 L545.6,365.9 L546.8,366.5 L548.0,367.5 L549.2,367.9 L550.4,368.1 L551.7,370.2 L553.0,370.7 L554.2,370.3 L555.5,372.3 L556.7,372.2 L558.0,373.1 L559.3,372.9 L560.5,375.2 L561.8,375.3 L563.1,376.6 L564.3,377.1 L565.6,376.3 L566.8,377.1 L568.1,377.3 L569.4,377.8 L570.6,380.1 L571.9,383.3 L573.2,400.5 L574.4,382.5 L576.2,383.0 L577.7,383.4 L579.2,384.6 L580.7,387.2 L582.0,387.2 L583.3,387.7 L584.5,389.1 L585.8,390.6 L587.3,391.5 L588.8,396.4 L590.9,406.6 L592.1,398.3 L593.4,398.6 L594.6,396.4 L595.9,400.1 L597.2,400.7 L598.4,403.0 L599.7,401.0 L601.0,400.7 L602.2,400.7 L603.5,403.9 L604.7,403.2 L606.0,405.9 L607.3,406.7 L608.5,407.1 L609.8,405.8 L611.1,406.2 L612.3,406.2 L613.6,406.4 L614.9,404.3 L616.1,407.2 L617.4,408.6 L618.6,410.0 L619.9,411.6 L621.2,417.8 L622.4,416.8 L623.7,419.2 L623.7,412.8 L624.4,421.3 L624.9,414.4 L625.5,423.8 L625.9,414.4 L626.5,456.6 L626.7,419.4 L626.7,459.7 L627.1,420.4 L627.1,432.5 L627.5,417.1 L627.8,430.6 L628.1,420.5 L628.8,435.8 L629.3,422.9 L629.7,440.8 L630.3,425.0 L630.7,433.9 L631.3,422.4 L631.8,443.0 L632.1,421.8 L632.5,425.2 L632.5,455.5 L632.9,426.2 L632.6,439.1 L632.9,425.6 L633.3,425.9 L633.3,461.6 L633.7,426.9 L633.3,453.4 L634.0,429.4 L634.4,445.9 L635.0,423.7 L635.5,444.4 L635.8,427.9 L636.3,439.6 L637.0,427.6 L637.6,439.8 L638.3,426.1 L639.0,436.9 L639.6,421.5 L639.9,443.3 L640.3,421.7 L640.8,435.2 L641.3,421.4 L641.7,434.5 L642.1,413.6 L642.8,430.8 L643.4,414.2 L643.8,429.7 L644.2,414.4 L644.8,423.6 L645.2,415.0 L645.5,427.9 L646.1,409.7 L646.5,427.6 L647.0,411.2 L647.4,421.0 L647.8,412.4 L648.4,424.8 L648.8,414.0 L649.4,427.9 L649.7,416.7 L650.3,428.4 L650.7,416.8 L651.3,427.7 L651.5,417.4 L651.5,452.5 L651.9,418.4 L651.9,425.9 L652.2,416.8 L652.2,462.7 L652.6,417.8 L652.5,429.8 L653.0,415.9 L653.5,425.8 L654.0,416.2 L654.6,428.1 L655.2,411.0 L655.7,426.2 L656.1,414.6 L656.6,420.7 L657.2,411.2 L657.8,419.0 L658.3,413.2 L658.6,423.7 L659.1,413.6 L659.7,422.0 L660.3,411.6 L660.7,421.1 L661.1,409.7 L661.7,425.8 L662.2,409.7 L662.6,421.9 L663.1,411.9 L663.7,422.3 L664.1,408.4 L664.4,423.1 L664.8,414.8 L665.2,419.4 L665.8,412.4 L666.1,422.4 L666.7,412.1 L667.4,421.4 L667.8,413.5 L668.3,422.1 L668.7,412.4 L669.2,414.6 L669.2,434.1 L669.6,415.6 L669.3,427.0 L669.7,414.2 L670.0,427.5 L670.4,414.1 L671.1,427.4 L671.7,415.5 L672.2,425.4 L672.8,417.3 L673.4,431.3 L674.1,419.1 L674.7,432.1 L675.3,420.3 L675.8,431.7 L676.3,418.7 L676.6,429.0 L677.1,425.4 L677.4,435.0 L678.1,424.9 L678.6,434.8 L678.9,427.6 L679.5,441.6 L680.2,428.9 L680.6,448.4 L681.0,429.3 L681.5,442.7 L682.0,429.1 L682.3,428.6 L682.3,467.5 L682.7,429.6 L682.3,448.6 L682.8,432.4 L683.3,444.1 L683.8,427.9 L684.5,449.7 L684.8,428.2 L684.8,428.2 L684.8,466.9 L685.2,429.2 L685.5,447.4 L685.9,429.1 L686.2,443.1 L686.6,426.4 L687.0,451.8 L687.4,432.5 L687.9,445.9 L688.4,428.7 L688.9,445.7 L689.2,429.4 L689.7,453.4 L690.4,424.3 L691.0,440.6 L691.4,428.8 L692.1,432.5 L692.5,425.8 L692.9,433.6 L693.5,422.1 L694.1,435.2 L694.6,422.1 L695.0,433.1 L695.5,423.3 L695.8,433.0 L696.3,420.7 L696.7,428.5 L697.3,420.7 L697.7,432.6 L698.1,421.6 L698.6,429.2 L699.2,417.1 L699.8,429.0 L700.4,421.0 L700.8,428.6 L701.4,423.6 L702.1,435.5 L702.6,424.4 L703.2,444.0 L703.8,431.4 L704.3,451.6 L704.9,436.2 L705.3,448.8 L705.7,437.8 L705.7,474.5 L706.1,438.8 L705.8,448.7 L706.2,439.8 L706.6,455.9 L707.0,440.1 L707.6,459.3 L708.1,439.7 L708.7,436.0 L708.7,471.8 L709.1,437.0 L708.8,467.8 L709.4,432.1 L709.7,444.6 L710.1,427.0 L710.6,446.2 L711.1,430.1 L711.7,441.9 L712.3,423.6 L712.7,433.9 L713.2,428.2 L713.9,435.8 L714.4,425.8 L715.0,434.1 L715.6,426.2 L716.0,438.1 L716.6,423.8 L717.2,438.1 L717.8,423.1 L718.3,438.5 L718.7,424.9 L719.3,438.5 L719.9,428.4 L720.5,434.2 L720.8,428.5 L721.3,435.7 L721.7,427.9 L722.3,438.6 L723.0,429.4 L723.3,437.5 L723.9,428.0 L724.4,436.5 L725.0,429.3 L725.4,438.2 L726.0,427.4 L726.5,436.6 L726.8,428.8 L727.1,436.2 L727.7,426.7 L728.1,437.2 L728.7,426.8 L729.3,437.3 L729.7,427.4 L730.3,436.7 L731.0,426.2 L731.6,436.2 L732.1,424.8 L732.4,439.4 L732.9,429.3 L733.5,440.1 L734.1,427.8 L734.7,437.2 L735.0,427.8 L735.5,441.4 L736.0,429.8 L736.7,441.7 L737.1,430.8 L737.8,439.4 L738.2,432.3 L738.7,440.1 L739.2,434.3 L739.8,441.5 L740.4,437.0 L740.7,444.7 L741.3,436.5 L741.9,448.3 L742.5,435.8 L743.1,444.2 L743.6,434.1 L744.2,446.3 L744.8,436.3 L745.3,453.4 L745.8,437.4 L746.4,454.0 L746.9,439.1 L747.5,454.2 L748.2,440.4 L748.7,454.8 L749.2,439.4 L749.4,438.6 L749.4,460.0 L749.8,439.6 L749.8,451.6 L750.1,437.3 L750.5,449.0 L751.0,436.0 L751.6,449.5 L752.1,438.0 L752.4,460.8 L752.4,438.6 L752.4,467.2 L752.8,439.6 L752.8,455.4 L753.3,438.2 L753.7,454.7 L754.1,437.7 L754.6,454.8 L755.3,437.4 L756.0,447.8 L756.3,438.7 L756.8,449.2 L757.2,438.5 L757.6,451.5 L758.0,436.5 L758.6,444.6 L759.0,432.5 L759.5,434.8 L759.5,460.6 L759.9,435.8 L759.5,450.2 L759.9,435.4 L760.5,455.5 L761.1,435.9 L761.5,441.3 L762.0,430.8 L762.6,442.0 L763.2,430.1 L763.5,440.6 L764.0,432.8 L764.7,440.3 L765.0,430.4 L765.6,442.0 L765.9,430.4 L766.6,440.9 L766.9,429.3 L767.3,439.2 L767.6,430.9 L768.0,437.7 L768.5,431.1 L768.9,439.6 L769.3,428.6 L769.7,439.3 L770.3,428.7 L770.7,437.0 L771.2,432.2 L771.7,440.0 L772.0,430.7 L772.4,437.2 L773.0,430.2 L773.6,441.9 L774.1,430.3 L774.4,441.4 L775.1,431.1 L775.6,443.0 L776.0,432.6 L776.5,442.6 L777.1,432.6 L777.7,441.5 L778.2,432.5 L778.7,441.6 L779.3,433.9 L780.0,440.0 L780.3,430.5 L780.9,445.0 L781.4,433.3 L782.1,445.2 L782.6,432.4 L783.0,446.1 L783.6,434.5 L784.2,448.2 L784.6,432.7 L785.0,443.3 L785.3,430.4 L786.0,447.8 L786.6,437.1 L787.1,447.2 L787.5,437.1 L787.9,450.8 L788.4,435.0 L788.9,450.8 L789.4,433.5 L789.8,437.0 L789.8,475.9 L790.2,438.0 L790.0,458.3 L790.5,440.1 L791.1,469.9 L791.8,443.5 L792.2,468.8 L792.8,440.3 L793.4,455.4 L794.0,443.0 L794.5,459.6 L795.1,437.1 L795.6,461.3 L795.6,437.8 L795.6,479.8 L796.0,438.8 L795.9,463.5 L796.3,438.5 L796.7,476.9 L797.4,440.4 L797.8,458.8 L798.4,439.3 L798.8,457.3 L799.3,446.4 L799.7,460.9 L800.0,443.0 L800.5,465.4 L800.8,434.0 L801.2,471.5 L801.9,440.9 L802.3,470.9 L802.7,444.1 L803.2,470.6 L803.9,436.5 L804.3,456.3 L804.6,442.9 L805.0,437.5 L805.0,482.0 L805.4,438.5 L805.3,467.7 L805.6,440.4 L806.1,473.9 L806.5,443.1 L806.9,466.9 L807.5,437.9 L808.2,459.3 L808.6,443.6 L809.0,456.9 L809.7,438.9 L810.2,473.3 L810.6,435.9 L810.9,468.4 L811.3,437.1 L811.7,472.4 L812.0,438.3 L812.5,463.9 L812.9,439.7 L813.3,468.7 L813.8,438.5 L813.8,437.3 L813.8,481.0 L814.2,438.3 L814.4,471.4 L814.7,443.7 L815.3,462.6 L815.9,441.6 L816.3,458.8 L816.8,441.4 L817.4,464.7 L818.0,437.8 L818.3,462.3 L818.8,436.5 L819.1,464.4 L819.6,443.7 L820.0,455.6 L820.4,441.1 L820.8,456.4 L821.5,437.6 L821.8,468.6 L822.4,436.1 L822.9,471.2 L823.2,439.2 L823.9,462.9 L824.5,436.6 L825.2,462.1 L825.6,441.1 L825.9,468.5 L826.4,438.2 L826.4,475.0 L826.8,439.2 L826.5,460.0 L827.0,438.1 L827.7,461.7 L828.4,443.4 L828.8,457.2 L829.3,441.5 L829.8,464.3 L830.3,444.9 L830.9,462.5 L831.2,442.7 L831.6,464.7 L832.0,438.7 L832.6,460.2 L833.1,435.9 L833.5,438.6 L833.5,482.3 L833.9,439.6 L833.5,456.9 L833.9,438.9 L834.6,461.3 L835.0,435.9 L835.4,469.1 L836.1,436.7 L836.6,472.2 L837.0,443.8 L837.3,460.7 L837.6,437.1 L837.9,464.0 L838.5,436.5 L838.9,468.1 L839.2,438.7 L839.8,463.3 L840.5,438.9 L840.9,457.3 L841.2,442.1 L841.8,461.7 L842.4,446.2 L843.0,473.0 L843.6,437.3 L844.0,463.0 L844.1,437.9 L844.1,477.2 L844.5,438.9 L844.3,461.9 L844.8,439.2 L845.2,458.9 L845.8,438.7 L846.2,458.4 L846.8,441.8 L847.4,477.8 L847.8,435.3 L847.9,436.9 L847.9,483.1 L848.3,437.9 L848.1,465.8 L848.6,438.4 L848.9,471.1 L849.4,436.1 L849.8,466.1 L850.5,437.2 L851.2,466.1 L851.7,438.0 L852.1,470.6 L852.6,444.8 L852.9,460.4 L853.4,445.2 L853.8,467.0 L854.2,433.4 L854.6,463.7 L855.2,439.1 L855.7,472.1 L856.1,436.1 L856.6,467.3 L857.1,442.9 L857.5,463.7 L858.0,438.6 L858.6,459.3 L859.0,438.6 L859.3,436.8 L859.3,479.0 L859.7,437.8 L859.5,456.2 L859.9,434.5 L860.2,468.7 L860.7,434.6 L861.3,472.9 L861.8,443.0 L862.4,467.7 L862.9,437.0 L863.5,465.2 L864.0,441.5 L864.6,457.6 L865.1,442.7 L865.4,471.2 L866.1,446.2 L866.7,466.4 L867.1,443.0 L867.5,457.7 L867.8,437.4 L868.5,461.3 L868.8,441.0 L869.2,469.3 L869.9,438.8 L870.4,472.3 L870.9,442.5 L871.5,458.8" fill="none" stroke="#006666" stroke-width="1.2" stroke-linejoin="round" shape-rendering="crispEdges" clip-path="url(#cbr)"/>
<path d="M515.6,349.6 L516.8,350.4 L518.0,351.0 L519.2,351.7 L520.4,352.3 L521.6,352.8 L522.8,353.4 L524.0,354.4 L525.2,354.8 L526.4,355.5 L527.6,356.4 L528.8,356.9 L530.0,357.6 L531.2,358.2 L532.4,358.9 L533.6,359.4 L534.8,360.2 L536.0,360.9 L537.2,361.5 L538.4,362.2 L539.6,362.8 L540.8,363.3 L542.0,364.2 L543.2,364.7 L544.4,365.3 L545.6,365.9 L546.8,366.8 L548.0,367.3 L549.2,368.1 L550.4,369.3 L551.7,369.7 L553.0,370.8 L554.2,370.5 L555.5,371.9 L556.7,372.0 L558.0,373.6 L559.3,374.2 L560.5,373.3 L561.8,374.1 L563.1,374.9 L564.3,377.1 L565.6,376.7 L566.8,377.7 L568.1,377.7 L569.4,378.8 L570.6,381.0 L571.9,383.4 L573.2,400.4 L574.4,384.0 L576.2,383.5 L577.7,384.2 L579.2,386.1 L580.7,387.2 L582.0,388.5 L583.3,388.6 L584.5,388.4 L585.8,391.0 L587.3,393.8 L588.8,396.1 L590.9,408.0 L592.1,398.2 L593.4,397.0 L594.6,398.5 L595.9,399.6 L597.2,400.5 L598.4,401.7 L599.7,403.2 L601.0,403.1 L602.2,400.5 L603.5,403.5 L604.7,403.8 L606.0,404.4 L607.3,405.1 L608.5,406.6 L609.8,407.1 L611.1,405.4 L612.3,406.4 L613.6,404.6 L614.9,405.8 L616.1,406.1 L617.4,408.7 L618.6,410.2 L619.9,412.9 L621.2,417.8 L622.4,417.5 L623.7,419.2 L623.7,415.1 L624.3,423.6 L624.7,416.2 L625.3,427.2 L625.9,418.0 L626.2,427.7 L626.7,420.3 L626.7,467.2 L627.1,421.3 L626.8,457.4 L627.3,420.6 L627.6,450.4 L628.1,419.9 L628.8,439.7 L629.1,422.8 L629.5,433.0 L629.9,426.8 L630.3,438.5 L630.8,422.8 L631.5,442.2 L631.9,426.0 L632.5,449.6 L632.5,426.9 L632.5,459.6 L632.9,427.9 L632.9,444.8 L633.3,427.4 L633.3,467.2 L633.7,428.4 L633.4,462.5 L633.9,429.4 L634.4,445.4 L634.7,429.3 L635.3,447.4 L635.7,429.5 L636.2,448.1 L636.7,430.6 L637.4,448.9 L637.8,423.9 L638.5,446.4 L639.1,424.5 L639.4,445.4 L640.1,426.9 L640.4,441.7 L641.0,422.3 L641.6,434.6 L642.0,420.7 L642.3,433.4 L642.7,419.1 L643.3,425.4 L643.7,413.6 L644.3,430.6 L644.8,413.5 L645.5,427.4 L646.1,416.4 L646.6,428.8 L647.2,415.0 L647.7,425.5 L648.0,415.2 L648.6,428.5 L649.1,418.5 L649.4,425.3 L650.1,419.8 L650.7,440.2 L651.2,419.4 L651.5,418.9 L651.5,459.6 L651.9,419.9 L651.7,429.2 L652.1,417.5 L652.2,418.0 L652.2,472.2 L652.6,419.0 L652.6,429.7 L653.3,417.8 L653.8,425.1 L654.4,415.6 L654.8,422.3 L655.3,413.9 L655.7,428.6 L656.2,415.5 L656.7,426.3 L657.1,413.2 L657.7,426.8 L658.3,413.0 L658.9,424.2 L659.5,412.5 L659.9,422.8 L660.3,412.1 L660.9,426.8 L661.5,411.5 L662.0,426.5 L662.7,413.3 L663.2,424.6 L663.8,413.3 L664.2,423.1 L664.7,413.3 L665.1,426.8 L665.8,415.3 L666.4,426.2 L666.8,416.1 L667.2,426.8 L667.6,417.6 L668.0,429.1 L668.4,417.0 L668.7,431.3 L669.2,416.0 L669.2,436.9 L669.6,417.0 L669.4,423.7 L670.0,417.0 L670.5,429.8 L671.0,418.1 L671.5,427.9 L672.0,419.5 L672.7,432.0 L673.3,420.7 L673.8,430.6 L674.4,421.8 L674.7,433.4 L675.0,419.4 L675.3,431.8 L676.0,424.4 L676.7,434.7 L677.4,426.6 L678.0,437.5 L678.4,427.9 L679.0,445.0 L679.6,432.3 L680.0,444.8 L680.5,427.8 L681.0,450.1 L681.6,430.5 L682.3,449.4 L682.3,430.1 L682.3,472.2 L682.7,431.1 L682.7,451.0 L683.1,430.6 L683.7,457.1 L684.3,434.8 L684.8,467.5 L684.8,429.5 L684.8,471.0 L685.2,430.5 L685.4,459.6 L685.9,432.7 L686.3,458.5 L686.7,431.7 L687.1,447.1 L687.5,430.4 L688.2,458.2 L688.8,430.0 L689.3,460.3 L689.7,427.9 L690.4,444.4 L690.9,426.8 L691.2,446.0 L691.8,427.5 L692.5,438.9 L692.9,426.0 L693.5,432.9 L694.0,425.9 L694.6,434.6 L695.0,424.2 L695.7,431.4 L696.4,425.2 L697.0,430.3 L697.4,423.0 L697.8,433.8 L698.1,420.4 L698.6,431.6 L699.2,421.0 L699.9,433.3 L700.4,422.5 L701.1,434.5 L701.7,424.8 L702.3,441.5 L702.7,429.8 L703.3,438.3 L703.8,432.4 L704.1,448.0 L704.6,438.3 L705.1,458.8 L705.6,443.4 L705.7,440.4 L705.7,479.8 L706.1,441.4 L706.2,456.8 L706.9,440.1 L707.5,455.8 L708.1,442.2 L708.7,437.9 L708.7,477.3 L709.1,438.9 L708.7,450.7 L709.0,435.9 L709.7,456.0 L710.1,434.7 L710.4,447.1 L711.1,429.2 L711.7,443.4 L712.3,429.7 L712.9,439.4 L713.4,428.0 L713.9,434.4 L714.4,427.8 L714.9,437.0 L715.6,429.5 L716.3,439.6 L716.6,426.6 L717.2,435.1 L717.5,430.6 L717.9,438.9 L718.4,429.9 L718.9,436.0 L719.2,429.8 L719.8,435.4 L720.2,428.3 L720.7,439.6 L721.2,430.1 L721.8,439.8 L722.4,430.3 L722.8,437.1 L723.2,429.2 L723.5,436.5 L724.2,430.4 L724.7,435.7 L725.4,430.8 L726.0,439.4 L726.3,428.9 L726.7,439.4 L727.2,431.2 L727.5,437.8 L728.1,430.0 L728.8,439.4 L729.1,428.3 L729.5,435.8 L729.9,428.2 L730.6,438.2 L731.0,427.2 L731.4,440.0 L732.0,429.4 L732.7,440.9 L733.0,430.1 L733.5,441.1 L734.0,429.9 L734.4,442.2 L734.8,430.0 L735.1,442.5 L735.8,430.8 L736.1,438.8 L736.7,433.2 L737.1,441.0 L737.8,434.8 L738.2,444.6 L738.8,434.1 L739.3,446.2 L739.6,434.7 L740.2,447.4 L740.6,437.8 L741.2,448.7 L741.6,437.3 L742.2,446.1 L742.6,439.9 L743.2,447.8 L743.7,440.3 L744.0,452.5 L744.6,442.3 L745.1,449.1 L745.5,437.9 L745.9,454.9 L746.6,440.5 L747.2,450.0 L747.5,442.8 L748.1,459.1 L748.6,439.0 L749.3,450.0 L749.4,439.9 L749.4,462.1 L749.8,440.9 L749.7,452.6 L750.2,439.4 L750.7,451.6 L751.0,441.4 L751.3,450.5 L751.9,442.6 L752.4,439.9 L752.4,471.0 L752.8,440.9 L752.6,464.2 L753.1,438.0 L753.4,455.6 L754.1,437.9 L754.8,453.3 L755.3,440.0 L755.9,450.7 L756.4,439.5 L757.0,451.8 L757.4,438.6 L758.0,452.2 L758.4,438.8 L758.9,447.6 L759.3,437.5 L759.5,435.8 L759.5,464.6 L759.9,436.8 L759.8,459.5 L760.2,438.2 L760.8,450.1 L761.1,437.8 L761.8,443.6 L762.4,435.0 L762.9,445.6 L763.5,431.8 L764.1,443.7 L764.6,432.6 L765.2,445.0 L765.6,432.4 L765.9,443.7 L766.4,432.4 L767.0,443.2 L767.6,431.9 L768.2,442.1 L768.8,431.7 L769.3,442.0 L769.9,433.0 L770.3,440.0 L770.9,432.9 L771.3,440.7 L771.9,431.7 L772.3,438.8 L773.0,433.0 L773.4,441.9 L774.0,430.7 L774.6,442.5 L775.1,432.3 L775.7,441.5 L776.3,432.7 L776.6,440.1 L777.2,433.2 L777.7,445.0 L778.1,433.3 L778.8,445.4 L779.3,435.3 L779.9,442.7 L780.5,435.4 L781.0,446.1 L781.4,433.3 L782.1,446.5 L782.5,435.5 L783.1,441.7 L783.7,433.4 L784.4,450.1 L785.0,437.1 L785.5,451.8 L785.8,437.2 L786.4,449.6 L786.8,440.5 L787.1,459.2 L787.8,436.0 L788.1,450.4 L788.7,441.7 L789.2,470.4 L789.8,438.2 L789.8,479.8 L790.2,439.2 L789.8,464.2 L790.4,443.8 L790.8,467.7 L791.3,444.3 L791.8,462.9 L792.2,445.8 L792.8,463.2 L793.1,443.7 L793.6,457.9 L794.1,445.2 L794.5,466.0 L794.9,438.1 L795.3,467.8 L795.6,439.1 L795.6,483.6 L796.0,440.1 L795.7,457.6 L796.1,442.3 L796.6,460.5 L796.9,445.9 L797.3,466.5 L797.7,438.3 L798.3,459.2 L798.9,441.6 L799.6,472.0 L800.1,444.3 L800.5,473.5 L800.9,446.3 L801.5,470.9 L802.0,444.6 L802.4,472.3 L802.8,441.5 L803.5,472.5 L803.8,442.2 L804.5,458.5 L805.0,438.8 L805.0,486.1 L805.4,439.8 L805.1,470.6 L805.8,445.4 L806.4,480.7 L806.7,441.3 L807.2,465.5 L807.6,444.5 L808.1,464.6 L808.4,441.0 L808.9,463.3 L809.6,441.7 L810.1,463.4 L810.8,446.4 L811.5,462.4 L812.1,445.1 L812.7,478.3 L813.0,442.6 L813.5,476.9 L813.8,438.6 L813.8,484.9 L814.2,439.6 L814.1,458.7 L814.8,437.2 L815.4,467.5 L816.1,437.9 L816.5,464.2 L817.0,445.1 L817.5,459.1 L818.2,441.0 L818.8,472.9 L819.4,442.6 L820.0,456.4 L820.5,444.1 L821.1,470.8 L821.6,443.8 L822.0,471.4 L822.6,440.4 L823.0,464.7 L823.7,438.6 L824.3,457.8 L824.8,446.9 L825.2,462.4 L825.5,447.3 L826.2,471.4 L826.4,439.5 L826.4,477.3 L826.8,440.5 L826.7,469.7 L827.1,438.5 L827.6,473.3 L828.1,438.7 L828.6,478.8 L829.1,441.8 L829.7,480.1 L830.0,447.9 L830.6,469.3 L831.2,440.1 L831.9,476.9 L832.2,445.1 L832.5,459.9 L833.0,443.8 L833.4,471.5 L833.5,439.9 L833.5,486.1 L833.9,440.9 L833.8,484.4 L834.2,438.6 L834.9,477.2 L835.6,441.7 L835.9,474.7 L836.4,447.2 L836.8,460.3 L837.3,445.8 L837.8,470.0 L838.2,445.4 L838.6,470.2 L839.1,444.2 L839.8,472.2 L840.3,441.1 L840.8,472.5 L841.5,445.0 L841.8,463.2 L842.2,444.1 L842.8,476.3 L843.5,439.6 L843.9,474.6 L844.1,439.2 L844.1,479.8 L844.5,440.2 L844.3,459.8 L844.9,441.5 L845.5,465.0 L845.9,442.2 L846.6,457.0 L846.9,447.3 L847.4,484.0 L847.9,438.3 L847.9,487.4 L848.3,439.3 L848.1,461.5 L848.4,439.7 L848.9,474.4 L849.3,444.4 L849.9,462.9 L850.6,443.8 L851.1,465.6 L851.5,442.9 L851.9,469.8 L852.5,435.8 L852.9,472.6 L853.4,441.1 L854.0,476.8 L854.7,440.2 L855.0,462.5 L855.7,440.7 L856.0,469.8 L856.6,438.5 L857.2,461.2 L857.6,445.4 L858.2,465.5 L858.7,446.3 L859.3,438.1 L859.3,482.3 L859.7,439.1 L859.3,469.4 L859.6,443.9 L860.0,461.1 L860.5,440.3 L860.9,467.7 L861.5,438.5 L862.1,469.4 L862.6,441.8 L863.2,469.0 L863.6,443.2 L864.0,472.0 L864.5,444.0 L864.8,472.3 L865.4,443.2 L865.8,459.0 L866.1,441.1 L866.7,467.8 L867.1,442.0 L867.6,468.3 L868.0,443.4 L868.6,459.7 L868.9,438.0 L869.6,469.2 L869.9,444.5 L870.2,457.3 L870.7,441.0 L871.1,474.0 L871.5,447.3" fill="none" stroke="#990099" stroke-width="1.3" stroke-linejoin="round" shape-rendering="crispEdges" clip-path="url(#cbr)"/>
<path d="M509.5,394.5 L515.5,400 L509.5,405.5 Z" fill="#990099"/>
<path d="M878,394.5 L872,400 L878,405.5 Z" fill="#990099"/>
<text x="872.6" y="446.5" fill="#006666" text-anchor="start" font-family="Liberation Mono, monospace" font-size="12.6" letter-spacing="0.44"  xml:space="preserve">8</text>
<text x="872.6" y="456.8" fill="#990099" text-anchor="start" font-family="Liberation Mono, monospace" font-size="12.6" letter-spacing="0.44"  xml:space="preserve">4</text>
</svg>
<div id="cwr" class="abs"></div>
<div id="sb" class="abs">
 <div class="abs" style="left:0;top:1px;width:16px;height:16px;background:#c6c6c6;border:1px solid;border-color:#7a7a7a #ececec #ececec #7a7a7a;text-align:center;line-height:16px;font-size:12px">1</div>
 <span style="left:20px;top:3px">Start -6 ns</span>
 <span style="left:316px;top:3px">IFBW 70 kHz</span>
 <span style="left:627px;top:3px">Stop 54 ns</span>
 <div class="tag" style="left:693px;width:23px;background:#3c3c8c">Sim</div>
 <div class="tag" style="left:718px;width:28px;background:#3c3c8c">PExt</div>
 <div class="tag" style="left:749px;width:24px;background:#3c3c8c">Cor</div>
 <div class="tag" style="left:776px;width:91px;background:#7d5a1c">TDR [Deskew]</div>
 <div class="tag" style="left:869px;width:10px;background:#bdbdbd;color:#000;border:1px solid;border-color:#777 #eee #eee #777;line-height:14px">!</div>
</div>
<div id="sbline" class="abs"></div>
<style>
#rp{left:885px;top:42px;width:139px;height:487px;overflow:hidden;background:#b0b0b0;border-left:1px solid #1e1e1e;font-size:13px}
#rp .hd{left:0;top:0;width:138px;height:35px;background:#333366;border-top:2px solid #8c8cc0;border-left:2px solid #7474ac;border-bottom:2px solid #0c0c18;border-right:2px solid #0a0a38;color:#fff;text-align:center;line-height:31px;font-size:13.5px}
#rp .strip{left:0;top:35px;width:5px;height:453px;background:#e4e4e4}
#rp .thumb{left:0;top:52px;width:4px;height:413px;border-bottom:1px solid #a0a0a0;background:#f2f2f2;border-right:1px solid #a0a0a0;border-top:1px solid #a0a0a0}
.sk{position:absolute;left:5px;width:133px;background:#b3b3b3;border-top:1px solid #d6d6d6;border-left:1px solid #cfcfcf;border-bottom:1px solid #1e1e1e;border-right:1px solid #555;color:#000;text-align:center;white-space:nowrap;letter-spacing:0.1px}
.sk.dk{background:#4b4b4b;color:#fff;border-top-color:#161616;border-left-color:#666;border-bottom-color:#1a1a1a}
.sk .l1{position:absolute;left:0;width:100%;text-align:center;line-height:16px}
.sk .fld{position:absolute;left:13px;width:104px;height:17px;background:#cfcfcf;border:1px solid;border-color:#6e6e6e #f4f4f4 #f4f4f4 #6e6e6e;line-height:15px;text-align:center}
.sk .ar{position:absolute;right:3px;width:0;height:0;border-left:6px solid #d8d8d8;border-top:6px solid transparent;border-bottom:6px solid transparent}
.nv{position:absolute;left:5px;width:134px;height:3px;background:#0d0d42;border-top:1px solid #8686c8}
</style>
<div id="rp" class="abs">
 <div class="hd abs">System</div>
 <div class="strip abs"></div><div class="thumb abs"></div>
 <div class="abs" style="left:4px;top:45px;width:1px;height:1px;background:#000"></div><div class="abs" style="left:3px;top:475px;width:1px;height:1px;background:#000"></div>
 <div class="sk" style="top:35px;height:45px"><div class="l1" style="top:14px">Print</div></div>
 <div class="sk" style="top:80px;height:43px"><div class="l1" style="top:5px">Invert Image</div><div class="fld" style="top:22px">ON</div></div>
 <div class="nv" style="top:123px;height:4px"></div>
 <div class="sk dk" style="top:127px;height:41px;border-bottom-width:3px"><div class="l1" style="top:3px">Dump</div><div class="l1" style="top:21px">Screen Image...</div></div>
 <div class="nv" style="top:168px"></div>
 <div class="sk" style="top:171px;height:42px"><div class="l1" style="top:4px">Multiport Test Set</div><div class="l1" style="top:22px">Setup</div><div class="ar" style="top:14px"></div></div>
 <div class="nv" style="top:213px"></div>
 <div class="sk" style="top:216px;height:43px"><div class="l1" style="top:13px">Misc Setup</div><div class="ar" style="top:15px"></div></div>
 <div class="sk" style="top:260px;height:43px"><div class="l1" style="top:5px">Backlight</div><div class="fld" style="top:22px">ON</div></div>
 <div class="nv" style="top:303px"></div>
 <div class="sk" style="top:306px;height:42px"><div class="l1" style="top:4px">Firmware</div><div class="l1" style="top:22px">Revision</div></div>
 <div class="nv" style="top:348px"></div>
 <div class="sk" style="top:352px;height:42px"><div class="l1" style="top:13px">Service Menu</div><div class="ar" style="top:15px"></div></div>
 <div class="sk" style="top:395px;height:43px"><div class="l1" style="top:13px">Help</div></div>
 <div class="nv" style="top:438px"></div>
 <div class="sk" style="top:442px;height:42px"><div class="l1" style="top:13px">Return</div></div>
</div>
<style>
#tdr{left:0;top:530px;width:886px;height:173px;background:#eeeeee;border-left:2px solid #d4d4d4;overflow:hidden}
#tdr .top{left:0;top:0;width:884px;height:42px;background:#fff}
.cx{display:inline-block;transform-origin:0 50%;white-space:nowrap}
.tb{position:absolute;top:5px;height:32px;border:1px solid #8a8a8a;border-right-color:#727272;border-bottom-color:#727272;border-radius:4px;background:linear-gradient(#f6f6f6 0,#e9e9e9 45%,#d2d2d2 100%);box-shadow:1px 1px 0 #707070,2px 2px 0 #7c7c7c;font-size:13px;color:#111;letter-spacing:0.05px}
.tb .tx{position:absolute;left:0;top:2px;text-align:center;line-height:14px}
.tb .dv{position:absolute;top:0;width:1px;height:30px;background:#8a8a8a}
.tb .dd{position:absolute;top:9px;width:0;height:0;border-top:13px solid #6c6c6c;border-left:6px solid transparent;border-right:6px solid transparent}
.tb.run{background:linear-gradient(#bdbdbd,#b0b0b0);border:2px solid #5e5e5e;box-shadow:inset 1px 1px 1px #8a8a8a;height:34px}
.ltab{position:absolute;left:0;font-weight:bold;font-size:12.5px;color:#000;white-space:nowrap;transform:scaleX(1.12);transform-origin:0 50%}
.grp{position:absolute;border:1px solid #d5dfe5;border-radius:4px}
.grp .cap{position:absolute;top:-7px;background:#eeeeee;padding:0 3px;font-size:12px;color:#0e0e3c;line-height:14px}
.vb{position:absolute;height:20px;background:#000;color:#fff;font-size:12px;line-height:18px;border:1px solid #d0d0d0;padding-left:5px;margin-top:-1px}
.knob{position:absolute;border-radius:50%;background:linear-gradient(#fdfdfd 0,#ececec 30%,#c6c6c6 66%,#9a9a9a 100%);box-shadow:0 0 1px 0.5px rgba(110,110,110,.7)}
.knob i{position:absolute;border-radius:50%;background:#666;box-shadow:0 0 0 1px #999,0 1px 1px 1px #eee}
.knob b{position:absolute;width:2px;background:#666;top:4px}
</style>
<div id="tdr" class="abs">
 <div class="top abs"></div>
 <!-- logo -->
 <div class="abs" style="left:8px;top:11px;font-size:10px;font-weight:bold;line-height:12.5px;color:#111"><span class="cx" style="transform:scaleX(.82)">E5071C<br>OPT.</span></div>
 <div class="abs" style="left:42px;top:6px;font-size:30px;line-height:32px;color:#000"><span class="cx" style="transform:scaleX(.59)">TDR</span></div>
 <!-- toolbar -->
 <div class="tb" style="left:100px;width:67px"><div class="tx" style="width:47px">Trace<br>3</div><div class="dv" style="left:46px"></div><div class="dd" style="left:50px"></div></div>
 <div class="tb" style="left:176px;width:67px"><div class="tx" style="width:47px">Auto<br>Scale</div><div class="dv" style="left:46px"></div><div class="dd" style="left:51px"></div></div>
 <div class="tb run" style="left:267px;width:69px"><div class="tx" style="width:65px;top:8px">Run</div></div>
 <div class="tb" style="left:343px;width:67px"><div class="tx" style="width:65px"><span style="padding-right:8px">Stop</span><br>Single</div></div>
 <div class="tb" style="left:434px;width:68px"><div class="tx" style="width:47px">Data<br>Mem</div><div class="dv" style="left:46px"></div><div class="dd" style="left:51px"></div></div>
 <div class="tb" style="left:510px;width:68px"><div class="tx" style="width:47px">Marker<br>Off</div><div class="dv" style="left:46px"></div><div class="dd" style="left:51px"></div></div>
 <div class="tb" style="left:586px;width:68px"><div class="tx" style="width:47px">Marker<br>Search</div><div class="dv" style="left:46px"></div><div class="dd" style="left:51px"></div></div>
 <div class="tb" style="left:681px;width:68px"><div class="tx" style="width:47px;top:9px">File</div><div class="dv" style="left:46px"></div><div class="dd" style="left:51px"></div></div>
 <div class="tb" style="left:756px;width:36px"><svg class="abs" style="left:0;top:0" width="34" height="31"><path d="M17,4 L25,13 H19.5 V18 H25 L17,27 L9,18 H14.5 V13 H9 Z" fill="#606060"/></svg></div>
 <div class="tb" style="left:798px;width:36px"><div class="tx" style="width:34px;top:3px;font-size:25px;line-height:26px;color:#666;font-weight:bold">?</div></div>
 <div class="tb" style="left:840px;width:36px"><svg class="abs" style="left:0;top:0" width="34" height="31"><path d="M8.5,7 L25.5,24 M25.5,7 L8.5,24" stroke="#5a5a5a" stroke-width="2.6" fill="none"/></svg></div>
 <!-- left tabs -->
 <div class="abs" style="left:0;top:42px;width:96px;height:131px;background:linear-gradient(90deg,#ffffff 0,#f6f6f6 60%,#eeeeee 100%)"></div>
 <div class="ltab" style="top:58px;left:7px">Setup</div>
 <div class="abs" style="left:1px;top:85px;width:86px;height:1px;background:#8c8c8c"></div>
 <div class="abs" style="left:1px;top:86px;width:86px;height:43px;background:linear-gradient(90deg,#79c4e8 0,#a9d8ee 35%,#e3eff4 75%,#eeeeee 100%)"></div>
 <div class="ltab" style="top:102px;left:7px;letter-spacing:.5px">TDR/TDT</div>
 <div class="abs" style="left:1px;top:129px;width:86px;height:1px;background:#8c8c8c"></div>
 <div class="ltab" style="top:146px;left:7px;letter-spacing:.2px">Eye/Mask</div>
 <!-- Horizontal group -->
 <div class="grp" style="left:98px;top:53px;width:178px;height:117px"><div class="cap" style="left:5px;width:53px;overflow:hidden"><span class="cx" style="transform:scaleX(.84)">Horizontal</span></div></div>
 <svg class="abs" style="left:100px;top:60px" width="90" height="26"><path d="M5,12 C5,2 9,2 9,12 C9,26 13,26 13,12 C13,2 17,2 17,12 C17,26 21,26 21,14" fill="none" stroke="#333" stroke-width="2.2"/><path d="M66,12 C67,0 72,2 73.5,14 C75,27 80,26 81,12" fill="none" stroke="#333" stroke-width="2.2"/></svg>
 <div class="knob" style="left:110px;top:81px;width:63px;height:63px"><b style="left:30.5px;height:11px"></b><i style="left:19px;top:19px;width:25px;height:25px"></i></div>
 <div class="abs" style="left:179px;top:101px;width:21px;height:21px;background:#000;border:1px solid #c8c8c8"><svg width="19" height="19" class="abs" style="left:0;top:0"><path d="M4.5,3 V17" stroke="#f0922a" stroke-width="2"/><path d="M6,10 H16 M12,6 L16,10 L12,14" stroke="#8fd0ff" stroke-width="1.6" fill="none"/></svg></div>
 <svg class="abs" style="left:205px;top:62px" width="56" height="20"><path d="M3.5,10 L16.5,3.5 V16.5 Z M50,10 L37,3.5 V16.5 Z" fill="#111"/></svg>
 <div class="knob" style="left:205px;top:86px;width:54px;height:54px"><b style="left:26px;height:10px"></b><i style="left:16px;top:16px;width:22px;height:22px"></i></div>
 <div class="vb" style="left:104px;top:149px;width:75px"><span class="cx" style="transform:scaleX(.89)">6 ns/div</span></div>
 <div class="vb" style="left:194px;top:149px;width:75px"><span class="cx" style="transform:scaleX(.89)">-6 ns</span></div>
 <!-- Vertical group -->
 <div class="grp" style="left:286px;top:53px;width:178px;height:117px"><div class="cap" style="left:5px;width:42px;overflow:hidden"><span class="cx" style="transform:scaleX(.84)">Vertical</span></div></div>
 <svg class="abs" style="left:288px;top:60px" width="90" height="26"><path d="M5,16 C6,8 10,7 12,12 C14,18 18,17 20,10" fill="none" stroke="#333" stroke-width="2"/><path d="M66,12 C67,0 72,2 73.5,14 C75,27 80,26 81,12" fill="none" stroke="#333" stroke-width="2.2"/></svg>
 <div class="knob" style="left:298px;top:81px;width:63px;height:63px"><b style="left:30.5px;height:11px"></b><i style="left:19px;top:19px;width:25px;height:25px"></i></div>
 <svg class="abs" style="left:392px;top:62px" width="56" height="20"><path d="M4,3.5 H18 L11,16.5 Z M37,16.5 H51 L44,3.5 Z" fill="#111"/></svg>
 <div class="knob" style="left:392px;top:86px;width:54px;height:54px"><b style="left:26px;height:10px"></b><i style="left:16px;top:16px;width:22px;height:22px"></i></div>
 <div class="vb" style="left:292px;top:149px;width:75px"><span class="cx" style="transform:scaleX(.89)">50 mV/div</span></div>
 <div class="vb" style="left:382px;top:149px;width:75px"><span class="cx" style="transform:scaleX(.89)">50 mV</span></div>
<style>
.tabp{position:absolute;left:474px;top:64px;width:402px;height:107px;border:1px solid #9aa0a6;background:#eeeeee}
.tab{position:absolute;height:18px;border:1px solid #9aa0a6;border-bottom:none;background:linear-gradient(#f4f4f4 0,#ebebeb 50%,#dcdcdc 55%,#cfcfcf 100%);font-size:12.5px;color:#111;text-align:center;line-height:19px}
.tab.on{background:#fff;height:21px;line-height:19px;z-index:2}
.pt{position:absolute;left:478px;top:69px;width:186px;height:99px;background:#fff;border:1px solid #8c8c8c}
.pt div{position:absolute;font-size:14px;color:#111;text-align:center;line-height:23px;width:46px;height:24px}
.pt .v{position:absolute;top:0;width:1px;height:97px;background:#b9b9b9}
.pt .h{position:absolute;left:0;height:1px;width:184px;background:#b9b9b9}
.pl{position:absolute;left:667px;font-size:12px;color:#111;letter-spacing:0.2px;white-space:nowrap;transform:scaleX(.9);transform-origin:0 50%}
.cb{position:absolute;height:21px;border:1px solid #707070;border-radius:3px;background:linear-gradient(#f7f7f7 0,#ebebeb 50%,#dedede 55%,#d2d2d2 100%);font-size:12.5px;color:#111;line-height:20px;padding-left:4px;overflow:hidden;white-space:nowrap}
.cb:after{content:"";position:absolute;right:4px;top:8px;border-top:5px solid #111;border-left:4.5px solid transparent;border-right:4.5px solid transparent}
.ck{position:absolute;left:802px;width:13px;height:13px;border:1px solid #c4c4c4;background:#f4f4f4}
.ckl{position:absolute;left:821px;font-size:12.5px;color:#a2a2a2;white-space:nowrap}
</style>
 <div class="tabp"></div>
 <div class="abs" style="left:475px;top:65px;width:4px;height:105px;background:#fff"></div>
 <div class="tab on" style="left:474px;top:44px;width:94px"><span class="cx" style="transform:scaleX(.83);transform-origin:50% 50%">Parameters</span></div>
 <div class="tab" style="left:568px;top:47px;width:88px;padding-right:4px"><span class="cx" style="transform:scaleX(.86);transform-origin:50% 50%">Gating</span></div>
 <div class="tab" style="left:656px;top:47px;width:88px"><span class="cx" style="transform:scaleX(.86);transform-origin:50% 50%">Trace Control</span></div>
 <div class="pt">
  <div class="abs" style="left:0;top:49px;width:45px;height:24px;background:#6495ed"></div>
  <i class="v" style="left:45px"></i><i class="v" style="left:91px"></i><i class="v" style="left:138px"></i>
  <i class="h" style="top:24px"></i><i class="h" style="top:48px"></i><i class="h" style="top:73px"></i>
  <div style="left:0px;top:0px;width:45px"><span class="cx" style="transform:scaleX(.8);transform-origin:50% 50%;margin-right:3px">T11</span></div>
  <div style="left:45px;top:0px;width:46px"><span class="cx" style="transform:scaleX(.8);transform-origin:50% 50%;margin-right:3px">T12</span></div>
  <div style="left:91px;top:0px;width:47px"><span class="cx" style="transform:scaleX(.8);transform-origin:50% 50%;margin-right:3px">T13</span></div>
  <div style="left:138px;top:0px;width:46px"><span class="cx" style="transform:scaleX(.8);transform-origin:50% 50%;margin-right:3px">T14</span></div>
  <div style="left:0px;top:24px;width:45px"><span class="cx" style="transform:scaleX(.8);transform-origin:50% 50%;margin-right:3px">T21</span></div>
  <div style="left:45px;top:24px;width:46px"><span class="cx" style="transform:scaleX(.8);transform-origin:50% 50%;margin-right:3px">T22</span></div>
  <div style="left:91px;top:24px;width:47px"><span class="cx" style="transform:scaleX(.8);transform-origin:50% 50%;margin-right:3px">T23</span></div>
  <div style="left:138px;top:24px;width:46px"><span class="cx" style="transform:scaleX(.8);transform-origin:50% 50%;margin-right:3px">T24</span></div>
  <div style="left:0px;top:48px;width:45px"><span class="cx" style="transform:scaleX(.8);transform-origin:50% 50%;margin-right:3px">T31</span></div>
  <div style="left:45px;top:48px;width:46px"><span class="cx" style="transform:scaleX(.8);transform-origin:50% 50%;margin-right:3px">T32</span></div>
  <div style="left:91px;top:48px;width:47px"><span class="cx" style="transform:scaleX(.8);transform-origin:50% 50%;margin-right:3px">T33</span></div>
  <div style="left:138px;top:48px;width:46px"><span class="cx" style="transform:scaleX(.8);transform-origin:50% 50%;margin-right:3px">T34</span></div>
  <div style="left:0px;top:73px;width:45px"><span class="cx" style="transform:scaleX(.8);transform-origin:50% 50%;margin-right:3px">T41</span></div>
  <div style="left:45px;top:73px;width:46px"><span class="cx" style="transform:scaleX(.8);transform-origin:50% 50%;margin-right:3px">T42</span></div>
  <div style="left:91px;top:73px;width:47px"><span class="cx" style="transform:scaleX(.8);transform-origin:50% 50%;margin-right:3px">T43</span></div>
  <div style="left:138px;top:73px;width:46px"><span class="cx" style="transform:scaleX(.8);transform-origin:50% 50%;margin-right:3px">T44</span></div>

 </div>
 <div class="pl" style="top:72px">Measure</div>
 <div class="pl" style="top:98px">Format</div>
 <div class="pl" style="top:124px">Stimulus</div>
 <div class="pl" style="top:150px;letter-spacing:.55px">Rise Time</div>
 <div class="cb" style="left:721px;top:69px;width:77px"><span class="cx" style="transform:scaleX(.84)">Time Doma</span></div>
 <div class="cb" style="left:802px;top:69px;width:72px"><span class="cx" style="transform:scaleX(.82)">Single-Enc</span></div>
 <div class="cb" style="left:721px;top:95px;width:77px"><span class="cx" style="transform:scaleX(.86)">Volt</span></div>
 <div class="cb" style="left:721px;top:121px;width:77px"><span class="cx" style="transform:scaleX(.86)">Lowpass St</span></div>
 <div class="cb" style="left:721px;top:147px;width:77px"><span class="cx" style="transform:scaleX(.86)">10-90%</span></div>
 <div class="ck" style="top:99px"></div><div class="ckl" style="top:98px"><span class="cx" style="transform:scaleX(.85)">Peeling</span></div>
 <div class="ck" style="top:125px"></div><div class="ckl" style="top:124px"><span class="cx" style="transform:scaleX(.85)">Smoothing</span></div>
 <div class="vb" style="left:802px;top:149px;width:72px;height:20px;border:none;line-height:20px;padding-left:6px"><span class="cx" style="transform:scaleX(.86)">35 ps</span></div>

</div>
<style>
#bl1{left:0;top:702px;width:886px;height:1px;background:#cfcfcf}
#bl2{left:0;top:703px;width:886px;height:2px;background:linear-gradient(#a6a6a6,#5c5c5c)}
#bb{left:0;top:705px;width:1024px;height:21px;background:#4d4d4d}
#bbb{left:0;top:725px;width:1024px;height:3px;background:linear-gradient(#2a2a2a 0,#050505 40%,#050505 100%)}
.st{position:absolute;top:2px;height:17px;font-size:16px;line-height:15px;text-align:center;white-space:nowrap;color:#fff}
.st.on{background:#36368a;border:1px solid #5a5aa8}
.st.off{background:#555;color:#858585;border:1px solid #7c7c7c}
</style>
<div class="abs" style="left:886px;top:526px;width:137px;height:177px;background:#4d4d4d;border:1px solid;border-color:#2b2b2b #8c8c8c #8c8c8c #2b2b2b"></div>
<div id="bl1" class="abs"></div><div id="bl2" class="abs"></div>
<div id="bb" class="abs">
 <div class="st on" style="left:704px;width:47px"><span class="cx" style="transform:scaleX(.9);transform-origin:50% 50%">Meas</span></div>
 <div class="st off" style="left:753px;width:39px"><span class="cx" style="transform:scaleX(.9);transform-origin:50% 50%">Stop</span></div>
 <div class="st off" style="left:794px;width:52px"><span class="cx" style="transform:scaleX(.9);transform-origin:50% 50%">ExtRef</span></div>
 <div class="st on" style="left:848px;width:31px"><span class="cx" style="transform:scaleX(.9);transform-origin:50% 50%">Svc</span></div>
 <div class="st" style="left:881px;width:137px;background:#4d4d4d;border:1px solid;border-color:#303030 #7c7c7c #7c7c7c #303030;font-size:17px"><span class="cx" style="transform:scaleX(.98);transform-origin:50% 50%">2021-03-11 17:36</span></div>
</div>
<div id="bbb" class="abs"></div>
</body></html>
